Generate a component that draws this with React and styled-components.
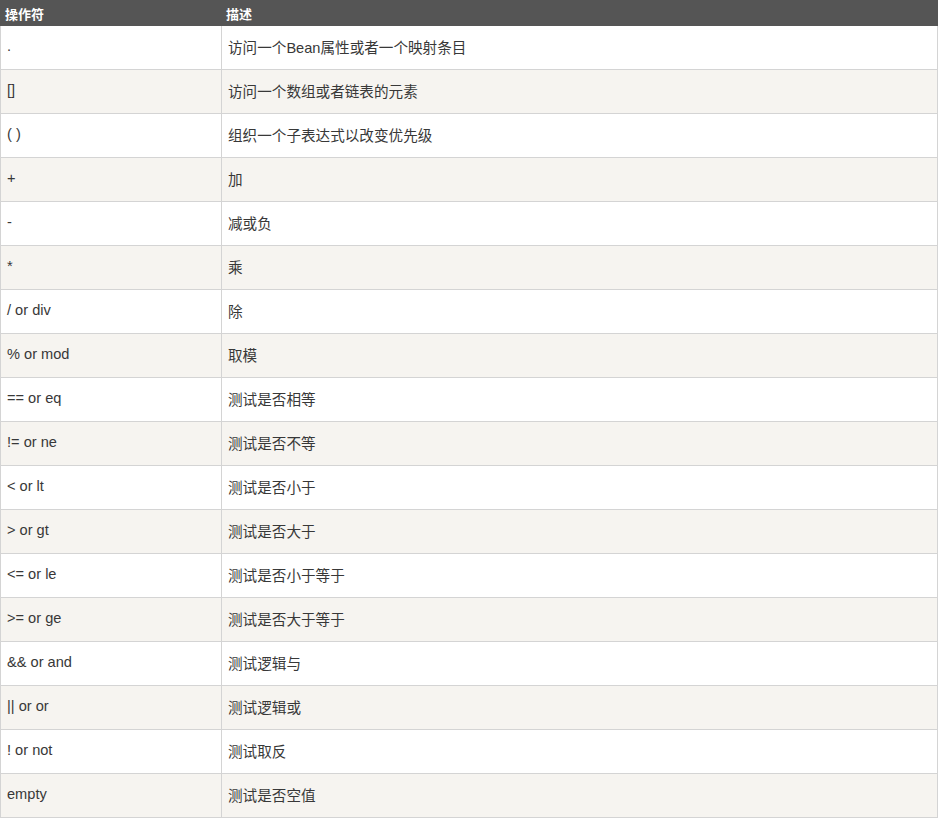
import React from 'react';
import styled, { createGlobalStyle } from 'styled-components';

const rows = [
  ['.', '访问一个Bean属性或者一个映射条目'],
  ['[]', '访问一个数组或者链表的元素'],
  ['( )', '组织一个子表达式以改变优先级'],
  ['+', '加'],
  ['-', '减或负'],
  ['*', '乘'],
  ['/ or div', '除'],
  ['% or mod', '取模'],
  ['== or eq', '测试是否相等'],
  ['!= or ne', '测试是否不等'],
  ['< or lt', '测试是否小于'],
  ['> or gt', '测试是否大于'],
  ['<= or le', '测试是否小于等于'],
  ['>= or ge', '测试是否大于等于'],
  ['&& or and', '测试逻辑与'],
  ['|| or or', '测试逻辑或'],
  ['! or not', '测试取反'],
  ['empty', '测试是否空值'],
];

const GlobalStyle = createGlobalStyle`
  body {
    margin: 0;
    background: #fff;
    font-family: "Liberation Sans", "Noto Sans CJK SC", sans-serif;
  }
`;

const Table = styled.table`
  width: 938px;
  border-collapse: collapse;
  font-size: 14.6px;
  color: #383838;
`;

const HeadCell = styled.th`
  background: #555;
  color: #fff;
  font-weight: bold;
  font-size: 13px;
  text-align: left;
  height: 25px;
  padding: 0 4px;
  border: 1px solid #555;
  box-sizing: border-box;
  width: ${(p) => p.$w || 'auto'};
`;

const Row = styled.tr`
  background: ${(p) => (p.$odd ? '#f6f4f0' : '#fff')};
`;

const Cell = styled.td`
  height: 44px;
  padding: 0 6px 3px;
  border: 1px solid #d4d4d4;
  box-sizing: border-box;
  width: ${(p) => p.$w || 'auto'};
`;

const App = () => (
  <>
    <GlobalStyle />
    <Table>
      <thead>
        <tr>
          <HeadCell $w="221px">操作符</HeadCell>
          <HeadCell>描述</HeadCell>
        </tr>
      </thead>
      <tbody>
        {rows.map(([op, desc], i) => (
          <Row key={i} $odd={i % 2 === 1}>
            <Cell $w="221px">{op}</Cell>
            <Cell>{desc}</Cell>
          </Row>
        ))}
      </tbody>
    </Table>
  </>
);

export default App;
